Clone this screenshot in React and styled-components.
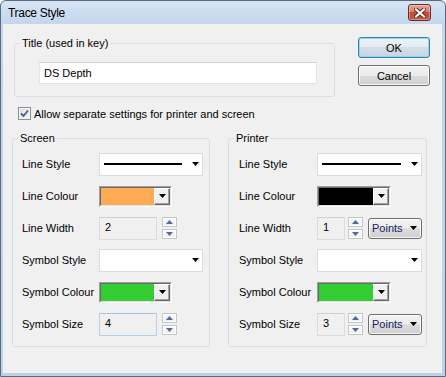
import React from "react";
import styled, { createGlobalStyle } from "styled-components";

const GlobalStyle = createGlobalStyle`
  html, body {
    margin: 0;
    padding: 0;
    background: #ffffff;
  }
  body {
    font-family: "Liberation Sans", Arial, sans-serif;
    font-size: 11px;
    color: #000;
  }
`;

const Window = styled.div`
  width: 446px;
  height: 377px;
  box-sizing: border-box;
  display: flex;
  flex-direction: column;
  border: 1px solid #5b6b7e;
  border-radius: 6px 6px 0 0;
  background: linear-gradient(to bottom, #d6e4f4 0px, #c3d7ed 23px, #bcd2ea 100%);
  padding: 0 3px 3px 2px;
  overflow: hidden;
`;

const TitleBar = styled.div`
  height: 23px;
  display: flex;
  align-items: center;
  justify-content: space-between;
  padding: 0 11px 0 5px;
`;

const Caption = styled.span`
  font-size: 12px;
  letter-spacing: -0.3px;
  color: #000;
`;

const CloseButton = styled.div`
  width: 23px;
  height: 17px;
  box-sizing: border-box;
  border: 1px solid #6b2a25;
  border-radius: 3px;
  background: linear-gradient(to bottom, #e6a497 0%, #d7806f 45%, #c24b35 50%, #c9583f 100%);
  box-shadow: inset 0 0 0 1px rgba(255, 255, 255, 0.35);
  display: flex;
  align-items: center;
  justify-content: center;
`;

const Client = styled.div`
  flex: 1;
  background: #f0f0f0;
  padding: 12px 0 0 9px;
`;

const TopRow = styled.div`
  display: flex;
  align-items: flex-start;
  margin-left: 2px;
`;

const GroupBox = styled.fieldset`
  margin: 0;
  padding: 0;
  min-width: 0;
  width: ${(p) => p.$width}px;
  box-sizing: border-box;
  border: 1px solid #d5dfe5;
  border-radius: 3px;
`;

const Legend = styled.legend`
  margin-left: 5px;
  padding: 0 2px;
  line-height: 14px;
  font-size: 11px;
`;

const TitleBody = styled.div`
  padding: 12px 17px 12px 24px;
`;

const TextInput = styled.input`
  display: block;
  width: 278px;
  height: 22px;
  box-sizing: border-box;
  margin: 0;
  border: 1px solid #e2e3ea;
  border-top-color: #cfd2d9;
  padding: 0 4px;
  background: #fff;
  font-family: inherit;
  font-size: 11px;
  color: #000;
  outline: none;
`;

const ButtonColumn = styled.div`
  display: flex;
  flex-direction: column;
  gap: 7px;
  margin: 1px 0 0 23px;
`;

const PushButton = styled.div`
  width: 72px;
  height: 21px;
  box-sizing: border-box;
  border: 1px solid ${(p) => (p.$default ? "#3c7fb1" : "#707070")};
  border-radius: 3px;
  background: ${(p) =>
    p.$default
      ? "linear-gradient(to bottom, #eef3f7 0%, #e4ebf1 50%, #d3dee7 50%, #c9d6e1 100%)"
      : "linear-gradient(to bottom, #f2f2f2 0%, #ebebeb 50%, #dddddd 50%, #cfcfcf 100%)"};
  box-shadow: inset 0 0 0 1px ${(p) => (p.$default ? "#86daf6" : "rgba(255,255,255,0.8)")};
  display: flex;
  align-items: center;
  justify-content: center;
`;

const CheckRow = styled.div`
  display: flex;
  align-items: center;
  gap: 3px;
  height: 13px;
  margin: 10px 0 0 6px;
`;

const CheckBox = styled.div`
  width: 13px;
  height: 13px;
  box-sizing: border-box;
  border: 1px solid #8e8f8f;
  background: linear-gradient(135deg, #dcdee2 0%, #f6f6f6 100%);
  box-shadow: inset 0 0 0 1px #f4f4f4;
  display: flex;
  align-items: center;
  justify-content: center;
`;

const GroupsRow = styled.div`
  display: flex;
  gap: 18px;
  margin-top: 11px;
`;

const SettingsGrid = styled.div`
  display: grid;
  grid-template-columns: ${(p) => p.$label}px 1fr;
  grid-auto-rows: 32px;
  align-items: center;
  padding: 3px ${(p) => p.$right}px 6px ${(p) => p.$left}px;
`;

const FieldLabel = styled.span`
  white-space: nowrap;
`;

const StyleCombo = styled.div`
  height: 23px;
  box-sizing: border-box;
  border: 1px solid #dadce0;
  background: #fff;
  display: flex;
  align-items: center;
  justify-content: flex-end;
  padding: 0 3px 0 4px;
`;

const LineSample = styled.div`
  flex: 1;
  height: 2px;
  background: #000;
  margin-right: 10px;
`;

const ColourCombo = styled.div`
  width: ${(p) => p.$width}px;
  height: 21px;
  box-sizing: border-box;
  border: 1px solid;
  border-color: #a0a0a0 #ffffff #ffffff #a0a0a0;
  display: flex;
`;

const ColourInner = styled.div`
  flex: 1;
  display: flex;
  border: 1px solid;
  border-color: #696969 #e3e3e3 #e3e3e3 #696969;
`;

const Swatch = styled.div`
  flex: 1;
  background: ${(p) => p.$colour};
`;

const ClassicDrop = styled.div`
  width: 16px;
  box-sizing: border-box;
  background: #f0f0f0;
  border: 1px solid;
  border-color: #ffffff #696969 #696969 #ffffff;
  box-shadow: inset -1px -1px 0 #a0a0a0;
  display: flex;
  align-items: center;
  justify-content: center;
`;

const Inline = styled.div`
  display: flex;
  align-items: center;
`;

const NumberField = styled.div`
  width: ${(p) => p.$width}px;
  height: 23px;
  box-sizing: border-box;
  border: 1px solid ${(p) => (p.$hot ? "#b7cfe6" : "#dcdcdc")};
  border-top-color: ${(p) => (p.$hot ? "#a3c0dc" : "#cfcfcf")};
  background: #f0f0f0;
  padding: 3px 0 0 5px;
  line-height: 13px;
`;

const Spin = styled.div`
  display: flex;
  flex-direction: column;
  gap: 2px;
  margin-left: ${(p) => p.$gap}px;
`;

const SpinPart = styled.div`
  width: 15px;
  height: 10px;
  box-sizing: border-box;
  border: 1px solid #c6c6c6;
  background: linear-gradient(to bottom, #fbfbfb, #ebebeb);
  box-shadow: inset 0 0 0 1px #ffffff;
  display: flex;
  align-items: center;
  justify-content: center;
`;

const UnitDrop = styled.div`
  width: 54px;
  height: 21px;
  box-sizing: border-box;
  margin-left: 5px;
  border: 1px solid #707070;
  border-radius: 3px;
  background: linear-gradient(to bottom, #f2f2f2 0%, #ebebeb 50%, #dddddd 50%, #cfcfcf 100%);
  box-shadow: inset 0 0 0 1px rgba(255, 255, 255, 0.8);
  display: flex;
  align-items: center;
  justify-content: space-between;
  padding: 0 4px 0 3px;
  color: #16205e;
`;

const DownArrow = ({ color = "#000" }) => (
  <svg width="7" height="4" viewBox="0 0 7 4">
    <polygon points="0,0 7,0 3.5,4" fill={color} />
  </svg>
);

const SpinArrow = ({ up }) => (
  <svg width="7" height="4" viewBox="0 0 7 4">
    <polygon points={up ? "0,4 7,4 3.5,0" : "0,0 7,0 3.5,4"} fill="#5068a8" />
  </svg>
);

const CloseGlyph = () => (
  <svg width="12" height="10" viewBox="0 0 12 10">
    <path d="M2 1.5 L10 8.5 M10 1.5 L2 8.5" stroke="#5a2420" strokeWidth="4" strokeLinecap="square" />
    <path d="M2 1.5 L10 8.5 M10 1.5 L2 8.5" stroke="#ffffff" strokeWidth="2.2" strokeLinecap="square" />
  </svg>
);

const CheckMark = () => (
  <svg width="9" height="9" viewBox="0 0 9 9">
    <path d="M1 4.5 L3.5 7 L8 1.5" stroke="#4a5c8f" strokeWidth="1.8" fill="none" />
  </svg>
);

const SpinButtons = ({ gap }) => (
  <Spin $gap={gap}>
    <SpinPart>
      <SpinArrow up />
    </SpinPart>
    <SpinPart>
      <SpinArrow />
    </SpinPart>
  </Spin>
);

const ColourPicker = ({ colour, width }) => (
  <ColourCombo $width={width}>
    <ColourInner>
      <Swatch $colour={colour} />
      <ClassicDrop>
        <DownArrow />
      </ClassicDrop>
    </ColourInner>
  </ColourCombo>
);

const SettingsGroup = ({ title, width, layout, lineColour, symbolColour, lineWidth, symbolSize, printer }) => (
  <GroupBox $width={width}>
    <Legend>{title}</Legend>
    <SettingsGrid $label={layout.label} $left={layout.left} $right={layout.right}>
      <FieldLabel>Line Style</FieldLabel>
      <StyleCombo>
        <LineSample />
        <DownArrow />
      </StyleCombo>

      <FieldLabel>Line Colour</FieldLabel>
      <ColourPicker colour={lineColour} width={layout.colour} />

      <FieldLabel>Line Width</FieldLabel>
      <Inline>
        <NumberField $width={layout.field}>{lineWidth}</NumberField>
        <SpinButtons gap={layout.spinGap} />
        {printer && (
          <UnitDrop>
            Points
            <DownArrow />
          </UnitDrop>
        )}
      </Inline>

      <FieldLabel>Symbol Style</FieldLabel>
      <StyleCombo>
        <DownArrow />
      </StyleCombo>

      <FieldLabel>Symbol Colour</FieldLabel>
      <ColourPicker colour={symbolColour} width={layout.colour} />

      <FieldLabel>Symbol Size</FieldLabel>
      <Inline>
        <NumberField $width={layout.field} $hot={!printer}>
          {symbolSize}
        </NumberField>
        <SpinButtons gap={layout.spinGap} />
        {printer && (
          <UnitDrop>
            Points
            <DownArrow />
          </UnitDrop>
        )}
      </Inline>
    </SettingsGrid>
  </GroupBox>
);

const screenLayout = { label: 77, left: 9, right: 6, colour: 73, field: 58, spinGap: 5 };
const printerLayout = { label: 78, left: 10, right: 4, colour: 74, field: 28, spinGap: 3 };

export default function App() {
  return (
    <>
      <GlobalStyle />
      <Window>
        <TitleBar>
          <Caption>Trace Style</Caption>
          <CloseButton>
            <CloseGlyph />
          </CloseButton>
        </TitleBar>
        <Client>
          <TopRow>
            <GroupBox $width={321}>
              <Legend>Title (used in key)</Legend>
              <TitleBody>
                <TextInput defaultValue="DS Depth" readOnly />
              </TitleBody>
            </GroupBox>
            <ButtonColumn>
              <PushButton $default>OK</PushButton>
              <PushButton>Cancel</PushButton>
            </ButtonColumn>
          </TopRow>

          <CheckRow>
            <CheckBox>
              <CheckMark />
            </CheckBox>
            <span>Allow separate settings for printer and screen</span>
          </CheckRow>

          <GroupsRow>
            <SettingsGroup
              title="Screen"
              width={198}
              layout={screenLayout}
              lineColour="#ffaa55"
              symbolColour="#33cc33"
              lineWidth="2"
              symbolSize="4"
            />
            <SettingsGroup
              title="Printer"
              width={199}
              layout={printerLayout}
              lineColour="#000000"
              symbolColour="#33cc33"
              lineWidth="1"
              symbolSize="3"
              printer
            />
          </GroupsRow>
        </Client>
      </Window>
    </>
  );
}
